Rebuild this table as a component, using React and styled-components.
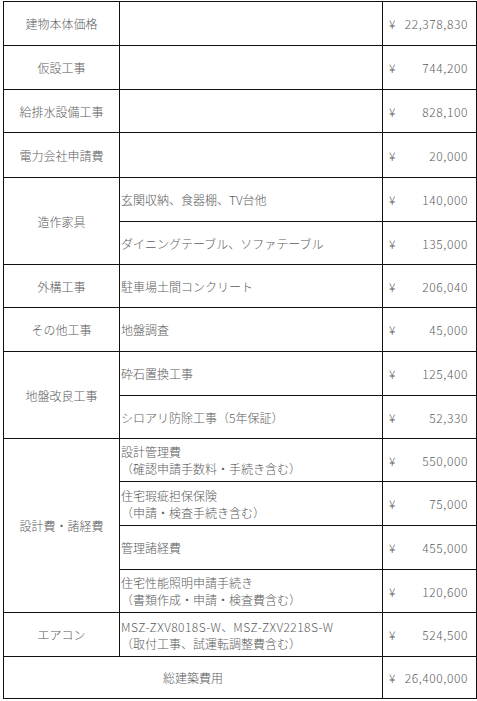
import React from "react";
import styled, { createGlobalStyle } from "styled-components";

const GlobalStyle = createGlobalStyle`
  html, body {
    margin: 0;
    padding: 0;
    background: #ffffff;
  }
  body {
    font-family: "Noto Sans CJK JP", "Noto Sans", sans-serif;
  }
`;

const Page = styled.div`
  padding: 1px 0 0 3px;
`;

const Sheet = styled.div`
  display: grid;
  grid-template-columns: 116px 263px 94px;
  grid-template-rows: ${(p) => p.$rows.map((h) => `${h}px`).join(" ")};
  border-top: 1px solid #111;
  border-left: 1px solid #111;
  width: max-content;
  color: #5c5c5c;
  font-size: 12px;
  font-weight: 300;
  line-height: 17px;
`;

const Cell = styled.div`
  border-right: 1px solid #111;
  border-bottom: 1px solid #111;
  display: flex;
  align-items: center;
  min-width: 0;
  overflow: hidden;
`;

const CategoryCell = styled(Cell)`
  grid-row: span ${(p) => p.$span};
  justify-content: center;
  text-align: center;
`;

const TotalLabel = styled(Cell)`
  grid-column: span 2;
  justify-content: center;
`;

const DescCell = styled(Cell)`
  flex-direction: column;
  align-items: flex-start;
  justify-content: center;
  padding-left: 1px;
  white-space: nowrap;
`;

const DescLine = styled.span`
  display: block;
`;

const Latin = styled.span`
  letter-spacing: 0.45px;
`;

const PriceCell = styled(Cell)`
  justify-content: space-between;
  padding: 0 8px 0 6px;
`;

const Yen = styled.span``;

const Amount = styled.span`
  letter-spacing: 0.6px;
`;

const groups = [
  { label: "建物本体価格", items: [{ desc: [], price: "22,378,830" }] },
  { label: "仮設工事", items: [{ desc: [], price: "744,200" }] },
  { label: "給排水設備工事", items: [{ desc: [], price: "828,100" }] },
  { label: "電力会社申請費", items: [{ desc: [], price: "20,000" }] },
  {
    label: "造作家具",
    items: [
      { desc: ["玄関収納、食器棚、TV台他"], price: "140,000" },
      { desc: ["ダイニングテーブル、ソファテーブル"], price: "135,000" },
    ],
  },
  { label: "外構工事", items: [{ desc: ["駐車場土間コンクリート"], price: "206,040" }] },
  { label: "その他工事", items: [{ desc: ["地盤調査"], price: "45,000" }] },
  {
    label: "地盤改良工事",
    items: [
      { desc: ["砕石置換工事"], price: "125,400" },
      { desc: ["シロアリ防除工事（5年保証）"], price: "52,330" },
    ],
  },
  {
    label: "設計費・諸経費",
    items: [
      { desc: ["設計管理費", "（確認申請手数料・手続き含む）"], price: "550,000" },
      { desc: ["住宅瑕疵担保保険", "（申請・検査手続き含む）"], price: "75,000" },
      { desc: ["管理諸経費"], price: "455,000" },
      { desc: ["住宅性能照明申請手続き", "（書類作成・申請・検査費含む）"], price: "120,600" },
    ],
  },
  {
    label: "エアコン",
    items: [
      {
        desc: [
          <>
            <Latin>MSZ-ZXV8018S-W</Latin>、<Latin>MSZ-ZXV2218S-W</Latin>
          </>,
          "（取付工事、試運転調整費含む）",
        ],
        price: "524,500",
      },
    ],
  },
];

const rowHeights = [44, 44, 43, 45, 44, 43, 43, 44, 44, 43, 43, 44, 44, 43, 44, 42];

function Price({ value }) {
  return (
    <PriceCell>
      <Yen>¥</Yen>
      <Amount>{value}</Amount>
    </PriceCell>
  );
}

export default function App() {
  return (
    <Page>
      <GlobalStyle />
      <Sheet $rows={rowHeights}>
        {groups.map((g) => (
          <React.Fragment key={g.label}>
            <CategoryCell $span={g.items.length}>{g.label}</CategoryCell>
            {g.items.map((it, i) => (
              <React.Fragment key={i}>
                <DescCell>
                  {it.desc.map((line, j) => (
                    <DescLine key={j}>{line}</DescLine>
                  ))}
                </DescCell>
                <Price value={it.price} />
              </React.Fragment>
            ))}
          </React.Fragment>
        ))}
        <TotalLabel>総建築費用</TotalLabel>
        <Price value="26,400,000" />
      </Sheet>
    </Page>
  );
}
